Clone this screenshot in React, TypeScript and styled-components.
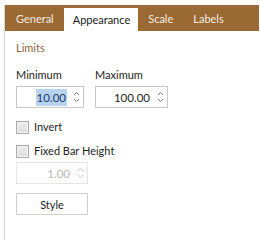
import React from 'react';
import styled, { createGlobalStyle } from 'styled-components';

const GlobalStyle = createGlobalStyle`
  html, body {
    margin: 0;
    padding: 0;
    background: #ffffff;
  }
  body {
    font-family: Lato, "Open Sans", sans-serif;
    font-size: 11px;
    color: #1e1e1e;
  }
`;

const Page = styled.div`
  width: 260px;
  height: 240px;
  padding: 5px 1px 0 4px;
  box-sizing: border-box;
  overflow: hidden;
`;

const Panel = styled.div`
  height: 235px;
  border-left: 1px solid #d4d4d4;
  display: flex;
  flex-direction: column;
`;

const TabBar = styled.div`
  height: 26px;
  background: #9a6934;
  display: flex;
  align-items: flex-end;
  padding-left: 1px;
`;

const Tab = styled.div<{ $active?: boolean }>`
  height: ${p => (p.$active ? 23 : 26)}px;
  padding: 0 ${p => (p.$active ? 8 : 10)}px 0 ${p => (p.$active ? 9 : 10)}px;
  display: flex;
  align-items: center;
  box-sizing: border-box;
  background: ${p => (p.$active ? '#ffffff' : 'transparent')};
  color: ${p => (p.$active ? '#1a1a1a' : '#f6ede2')};
  font-size: 11px;
`;

const Body = styled.div`
  padding: 9px 0 0 11px;
  display: flex;
  flex-direction: column;
`;

const SectionTitle = styled.div`
  color: #8b6440;
  font-size: 11px;
  line-height: 16px;
`;

const LimitsRow = styled.div`
  display: flex;
  gap: 11px;
  margin-top: 11px;
`;

const Field = styled.div`
  display: flex;
  flex-direction: column;
`;

const FieldLabel = styled.div`
  font-size: 11px;
  line-height: 16px;
  margin-bottom: 3px;
`;

const SpinBox = styled.div<{ $width: number; $disabled?: boolean }>`
  width: ${p => p.$width}px;
  height: 22px;
  box-sizing: border-box;
  border: 1px solid ${p => (p.$disabled ? '#e6e6e6' : '#c8c8c8')};
  display: flex;
  align-items: center;
  justify-content: flex-end;
  padding-right: 3px;
  gap: 6px;
  color: ${p => (p.$disabled ? '#b8b8b8' : '#1e1e1e')};
  font-size: 11.5px;
`;

const Value = styled.span<{ $selected?: boolean }>`
  background: ${p => (p.$selected ? '#b7d3f0' : 'transparent')};
  color: ${p => (p.$selected ? '#1b3a6b' : 'inherit')};
  padding: 1px 1px;
  line-height: 15px;
`;

const Arrows = styled.svg`
  width: 7px;
  height: 14px;
`;

const CheckRow = styled.label<{ $top: number }>`
  display: flex;
  align-items: center;
  gap: 5px;
  margin-top: ${p => p.$top}px;
  font-size: 11px;
  line-height: 16px;
`;

const CheckBox = styled.span`
  width: 11px;
  height: 11px;
  border: 1px solid #a8a8a8;
  background: linear-gradient(#eeeeee, #dcdcdc);
  box-shadow: inset 0 0 0 1px #f4f4f4;
`;

const Indented = styled.div<{ $top: number }>`
  margin-top: ${p => p.$top}px;
`;

const Button = styled.button`
  width: 72px;
  height: 22px;
  margin-top: 9px;
  border: 1px solid #cfcfcf;
  background: #ffffff;
  font-family: inherit;
  font-size: 11px;
  color: #1e1e1e;
  padding: 0;
`;

const SpinArrows: React.FC<{ color: string }> = ({ color }) => (
  <Arrows viewBox="0 0 7 14">
    <path d="M1 5 L3.5 2.5 L6 5" fill="none" stroke={color} strokeWidth="1" />
    <path d="M1 9 L3.5 11.5 L6 9" fill="none" stroke={color} strokeWidth="1" />
  </Arrows>
);

const App: React.FC = () => {
  return (
    <Page>
      <GlobalStyle />
      <Panel>
        <TabBar>
          <Tab>General</Tab>
          <Tab $active>Appearance</Tab>
          <Tab>Scale</Tab>
          <Tab>Labels</Tab>
        </TabBar>
        <Body>
          <SectionTitle>Limits</SectionTitle>
          <LimitsRow>
            <Field>
              <FieldLabel>Minimum</FieldLabel>
              <SpinBox $width={68}>
                <Value $selected>10.00</Value>
                <SpinArrows color="#7a7a7a" />
              </SpinBox>
            </Field>
            <Field>
              <FieldLabel>Maximum</FieldLabel>
              <SpinBox $width={73}>
                <Value>100.00</Value>
                <SpinArrows color="#7a7a7a" />
              </SpinBox>
            </Field>
          </LimitsRow>
          <CheckRow $top={11}>
            <CheckBox />
            Invert
          </CheckRow>
          <CheckRow $top={8}>
            <CheckBox />
            Fixed Bar Height
          </CheckRow>
          <Indented $top={3}>
            <SpinBox $width={72} $disabled>
              <Value>1.00</Value>
              <SpinArrows color="#c8c8c8" />
            </SpinBox>
          </Indented>
          <Button>Style</Button>
        </Body>
      </Panel>
    </Page>
  );
};

export default App;
